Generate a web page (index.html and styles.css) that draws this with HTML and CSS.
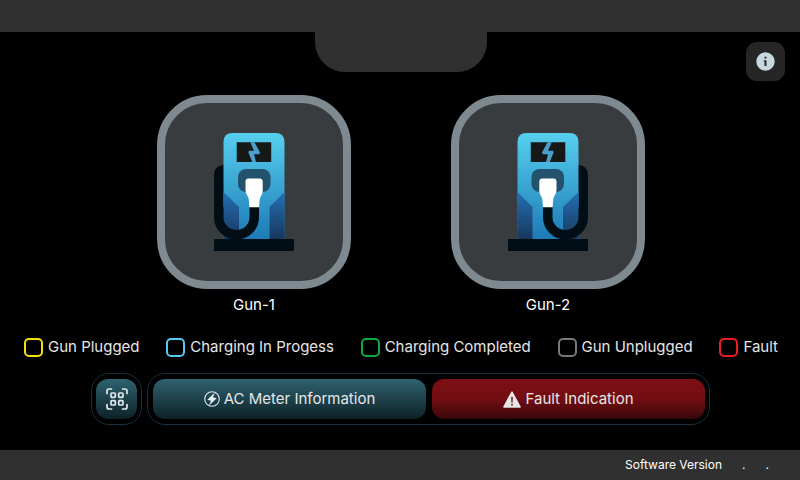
FILE: index.html
```
<!DOCTYPE html>
<html lang="en">
<head>
<meta charset="utf-8">
<meta name="viewport" content="width=device-width, initial-scale=1">
<title>EV Charger</title>
<link rel="stylesheet" href="styles.css">
</head>
<body>
<svg class="defs" width="0" height="0" aria-hidden="true">
  <defs>
    <linearGradient id="body" x1="0" y1="0" x2="0" y2="1">
      <stop offset="0" stop-color="#56cfee"/>
      <stop offset="1" stop-color="#1d7ab5"/>
    </linearGradient>
    <linearGradient id="side" x1="0" y1="0" x2="0" y2="1">
      <stop offset="0" stop-color="#256fb4"/>
      <stop offset="1" stop-color="#17375c"/>
    </linearGradient>
    <symbol id="charger" viewBox="0 0 80 118">
      <path fill="#020e15" d="M10 32H9Q0 33 0 42V84H10Z"/>
      <path fill="url(#body)" d="M9.500 106.500V9Q9.500 0 18.500 0H61.500Q70.500 0 70.500 9V106.500Z"/>
      <path fill="url(#side)" d="M9.500 59L25 74V106.500H9.500Z"/>
      <path fill="url(#side)" d="M70.500 59L55.500 74V106.500H70.500Z"/>
      <path fill="#161918" d="M22.700 9.300H57.200V29H22.700Z"/>
      <path fill="#4a9fcd" d="M36.300 9.300H40.500L46 19.500L45.300 21.200H40L42 29H38.300L34.300 19.200L35 17.700H40Z"/>
      <rect x="24" y="36" width="32.500" height="23" rx="8" fill="#23536c"/>
      <path fill="none" stroke="#020e15" stroke-width="9.500" d="M4.750 74V84.250A17.750 17.500 0 0 0 40.250 84.250V73"/>
      <path fill="#fff" d="M34.500 45.500H45.500Q48.700 45.500 48.700 48.700V58Q48.700 61 46.500 64Q45.500 66 45.500 68L45 74.300H35.300L35 68Q35 65 33.500 63Q31.500 60 31.500 57V48.700Q31.500 45.500 34.500 45.500Z"/>
      <rect x="0" y="106" width="80" height="12" rx=".5" fill="#020e15"/>
    </symbol>
  </defs>
</svg>

<header class="topbar"><div class="notch"></div></header>

<main class="main">
  <button class="info" type="button" aria-label="Information">
    <svg width="19" height="19" viewBox="0 0 19 19" aria-hidden="true">
      <circle cx="9.500" cy="9.500" r="9.200" fill="#c5d9df"/>
      <path fill="#262626" d="M8.500 4.700h2v1.900h-2zM7.700 8.200h2.800v5.800h-2V9.400h-.8z"/>
    </svg>
  </button>

  <section class="guns">
    <button class="gun" type="button">
      <span class="tile"><svg class="charger" aria-hidden="true"><use href="#charger"/></svg></span>
      <span>Gun-1</span>
    </button>
    <button class="gun" type="button">
      <span class="tile"><svg class="charger mirrored" aria-hidden="true"><use href="#charger"/></svg></span>
      <span>Gun-2</span>
    </button>
  </section>

  <ul class="legend">
    <li><i class="swatch plugged"></i>Gun Plugged</li>
    <li><i class="swatch charging"></i>Charging In Progess</li>
    <li><i class="swatch completed"></i>Charging Completed</li>
    <li><i class="swatch unplugged"></i>Gun Unplugged</li>
    <li><i class="swatch fault"></i>Fault</li>
  </ul>

  <nav class="actions">
    <div class="group">
      <button class="action scan" type="button" aria-label="Scan code">
        <svg width="22" height="22" viewBox="0 0 22 22" fill="none" stroke="#dfe9ec" stroke-width="1.700" aria-hidden="true">
          <path stroke-linecap="round" d="M1 5.500V3Q1 1 3 1H5.500M16.500 1H19Q21 1 21 3V5.500M21 16.500V19Q21 21 19 21H16.500M5.500 21H3Q1 21 1 19V16.500"/>
          <g><rect x="5" y="5" width="4.300" height="4.300" rx=".8"/><rect x="12.700" y="5" width="4.300" height="4.300" rx=".8"/><rect x="5" y="12.700" width="4.300" height="4.300" rx=".8"/><rect x="12.700" y="12.700" width="4.300" height="4.300" rx=".8"/></g>
        </svg>
      </button>
    </div>
    <div class="group wide">
      <button class="action meter" type="button">
        <svg width="16" height="16" viewBox="0 0 16 16" aria-hidden="true">
          <circle cx="8" cy="8" r="7.300" fill="none" stroke="#dfe9ec" stroke-width="1.100"/>
          <path fill="#e6eef0" d="M10.800 1.500L3.300 8.800L7 9.800L4.800 14.800L12.700 7.200L9 6.300Z"/>
        </svg>
        AC Meter Information
      </button>
      <button class="action alert" type="button">
        <svg width="18" height="17" viewBox="0 0 18 17" aria-hidden="true">
          <path fill="#e6e6e6" d="M9 .3Q9.500 .3 9.800 .9L17.800 15.700Q18 16.700 17 16.700H1Q0 16.700 .2 15.700L8.200 .9Q8.500 .3 9 .3Z"/>
          <path fill="#6b0c12" d="M8.200 6h1.600l-.2 5.500H8.400zM8.200 12.800h1.600v1.600H8.200z"/>
        </svg>
        Fault Indication
      </button>
    </div>
  </nav>
</main>

<footer class="bottombar">
  <span>Software Version</span><span>.</span><span>.</span>
</footer>
</body>
</html>
```
FILE: styles.css
```
* {
  box-sizing: border-box;
}

body {
  margin: 0;
  min-height: 100vh;
  display: flex;
  flex-direction: column;
  background: #000;
  color: #e6e6e6;
  font: 15px/20px Inter, "Liberation Sans", sans-serif;
}

button {
  margin: 0;
  padding: 0;
  border: 0;
  background: none;
  color: inherit;
  font: inherit;
  cursor: pointer;
}

.defs {
  position: absolute;
}

.topbar {
  position: relative;
  height: 32px;
  background: #303030;
}

.notch {
  position: absolute;
  top: 100%;
  left: 50%;
  width: 172px;
  height: 40px;
  margin-left: -85px;
  border-radius: 0 0 30px 30px;
  background: #303030;
}

.main {
  position: relative;
  flex: 1;
  display: flex;
  flex-direction: column;
  padding-top: 63px;
}

.info {
  position: absolute;
  top: 10px;
  right: 15px;
  width: 39px;
  height: 39px;
  display: grid;
  place-items: center;
  border-radius: 11px;
  background: #262626;
}

.guns {
  display: flex;
  justify-content: center;
  gap: 100px;
  padding-left: 2px;
}

.gun {
  display: flex;
  flex-direction: column;
  align-items: center;
  gap: 6px;
  color: #fff;
}

.tile {
  width: 194px;
  height: 194px;
  display: grid;
  place-items: center;
  border: 8px solid #7f8a90;
  border-radius: 50px;
  background: #383c3f;
}

.charger {
  width: 80px;
  height: 118px;
}

.mirrored {
  transform: scaleX(-1);
}

.legend {
  display: flex;
  justify-content: space-between;
  margin: 22px 0 0;
  padding: 0 22px 0 24px;
  list-style: none;
  white-space: nowrap;
}

.legend li {
  display: flex;
  align-items: center;
  gap: 5px;
}

.swatch {
  width: 19px;
  height: 19px;
  border: 2px solid;
  border-radius: 5px;
}

.plugged { border-color: #f4e00c; }
.charging { border-color: #56cbf0; }
.completed { border-color: #0aab45; }
.unplugged { border-color: #75787c; }
.fault { border-color: #ed1c24; }

.actions {
  display: flex;
  justify-content: center;
  gap: 5px;
  margin-top: 16px;
  padding: 0 90px 0 91px;
}

.group {
  display: flex;
  gap: 6px;
  padding: 5px 4px;
  border: 1px solid #17303a;
  border-radius: 18px;
}

.wide {
  flex: 1;
  padding: 5px 4px 5px 5px;
}

.action {
  height: 40px;
  display: flex;
  align-items: center;
  justify-content: center;
  gap: 4px;
  border-radius: 12px;
  background: linear-gradient(#2f6270, #0d2127);
}

.wide .action {
  flex: 1;
}

.scan {
  width: 41px;
}

.wide .alert {
  background: linear-gradient(#7c0f14, #720e13 50%, #38070a);
}

.bottombar {
  height: 30px;
  display: flex;
  align-items: center;
  justify-content: flex-end;
  gap: 20px;
  padding-right: 31px;
  background: #303030;
  color: #fff;
  font-size: 12px;
}
```
